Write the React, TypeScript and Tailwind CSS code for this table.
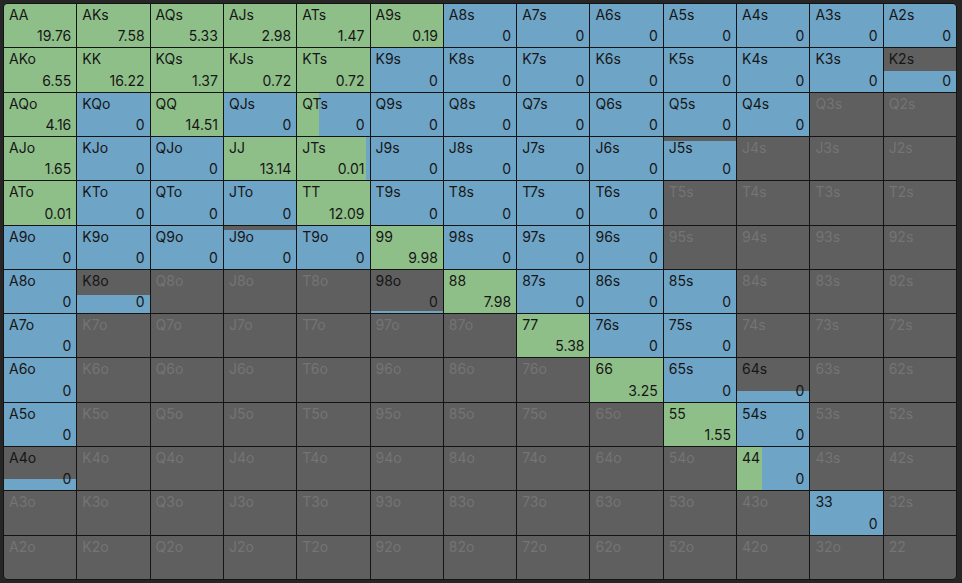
import React from "react";

const RANKS = ["A", "K", "Q", "J", "T", "9", "8", "7", "6", "5", "4", "3", "2"];

type Spec = { v: string; h: number; g: number };

const GREEN: Record<string, string> = {
  AA: "19.76", AKs: "7.58", AQs: "5.33", AJs: "2.98", ATs: "1.47", A9s: "0.19",
  AKo: "6.55", KK: "16.22", KQs: "1.37", KJs: "0.72", KTs: "0.72",
  AQo: "4.16", QQ: "14.51", AJo: "1.65", JJ: "13.14", ATo: "0.01", TT: "12.09",
  "99": "9.98", "88": "7.98", "77": "5.38", "66": "3.25", "55": "1.55",
};

const BLUE = [
  "A8s", "A7s", "A6s", "A5s", "A4s", "A3s", "A2s",
  "K9s", "K8s", "K7s", "K6s", "K5s", "K4s", "K3s",
  "KQo", "QJs", "Q9s", "Q8s", "Q7s", "Q6s", "Q5s", "Q4s",
  "KJo", "QJo", "J9s", "J8s", "J7s", "J6s",
  "KTo", "QTo", "JTo", "T9s", "T8s", "T7s", "T6s",
  "A9o", "K9o", "Q9o", "T9o", "98s", "97s", "96s",
  "A8o", "87s", "86s", "85s", "A7o", "76s", "75s",
  "A6o", "65s", "A5o", "54s", "33",
];

// mixed / partial cells: h = filled height, g = share of green in the fill
const PARTIAL: Record<string, Spec> = {
  JTs: { v: "0.01", h: 1, g: 0.95 },
  QTs: { v: "0", h: 1, g: 0.3 },
  "44": { v: "0", h: 1, g: 0.34 },
  K2s: { v: "0", h: 0.48, g: 0 },
  J5s: { v: "0", h: 0.91, g: 0 },
  J9o: { v: "0", h: 0.9, g: 0 },
  K8o: { v: "0", h: 0.42, g: 0 },
  "98o": { v: "0", h: 0.04, g: 0 },
  "64s": { v: "0", h: 0.24, g: 0 },
  A4o: { v: "0", h: 0.26, g: 0 },
};

function handName(i: number, j: number) {
  if (i === j) return RANKS[i] + RANKS[j];
  if (j > i) return RANKS[i] + RANKS[j] + "s";
  return RANKS[j] + RANKS[i] + "o";
}

function specFor(hand: string): Spec | null {
  if (GREEN[hand]) return { v: GREEN[hand], h: 1, g: 1 };
  if (BLUE.includes(hand)) return { v: "0", h: 1, g: 0 };
  return PARTIAL[hand] ?? null;
}

const Cell = ({ hand }: { hand: string }) => {
  const spec = specFor(hand);
  return (
    <div className="relative bg-[#5f5f5f] overflow-hidden">
      {spec && (
        <div
          className="absolute left-0 right-0 bottom-0 flex"
          style={{ height: `${spec.h * 100}%` }}
        >
          <div className="h-full bg-[#8fbf89]" style={{ width: `${spec.g * 100}%` }} />
          <div className="h-full flex-1 bg-[#6ea4c6]" />
        </div>
      )}
      <div className="relative h-full flex flex-col justify-between px-[5px] py-[3px] text-[14px] leading-[16px]">
        <span className={spec ? "text-[#161616]" : "text-[#747474]"}>{hand}</span>
        {spec && <span className="self-end text-[#161616]">{spec.v}</span>}
      </div>
    </div>
  );
};

export default function App() {
  return (
    <div
      className="w-[962px] h-[583px] bg-[#262626] pl-[3px] pt-[3px] pr-[5px] pb-[3px]"
      style={{ fontFamily: "Inter, 'Noto Sans', sans-serif" }}
    >
      <div className="w-full h-full rounded-[5px] overflow-hidden bg-[#141414] border border-[#141414] grid grid-cols-13 grid-rows-13 gap-px">
        {RANKS.map((_, i) =>
          RANKS.map((__, j) => <Cell key={`${i}-${j}`} hand={handName(i, j)} />)
        )}
      </div>
    </div>
  );
}
